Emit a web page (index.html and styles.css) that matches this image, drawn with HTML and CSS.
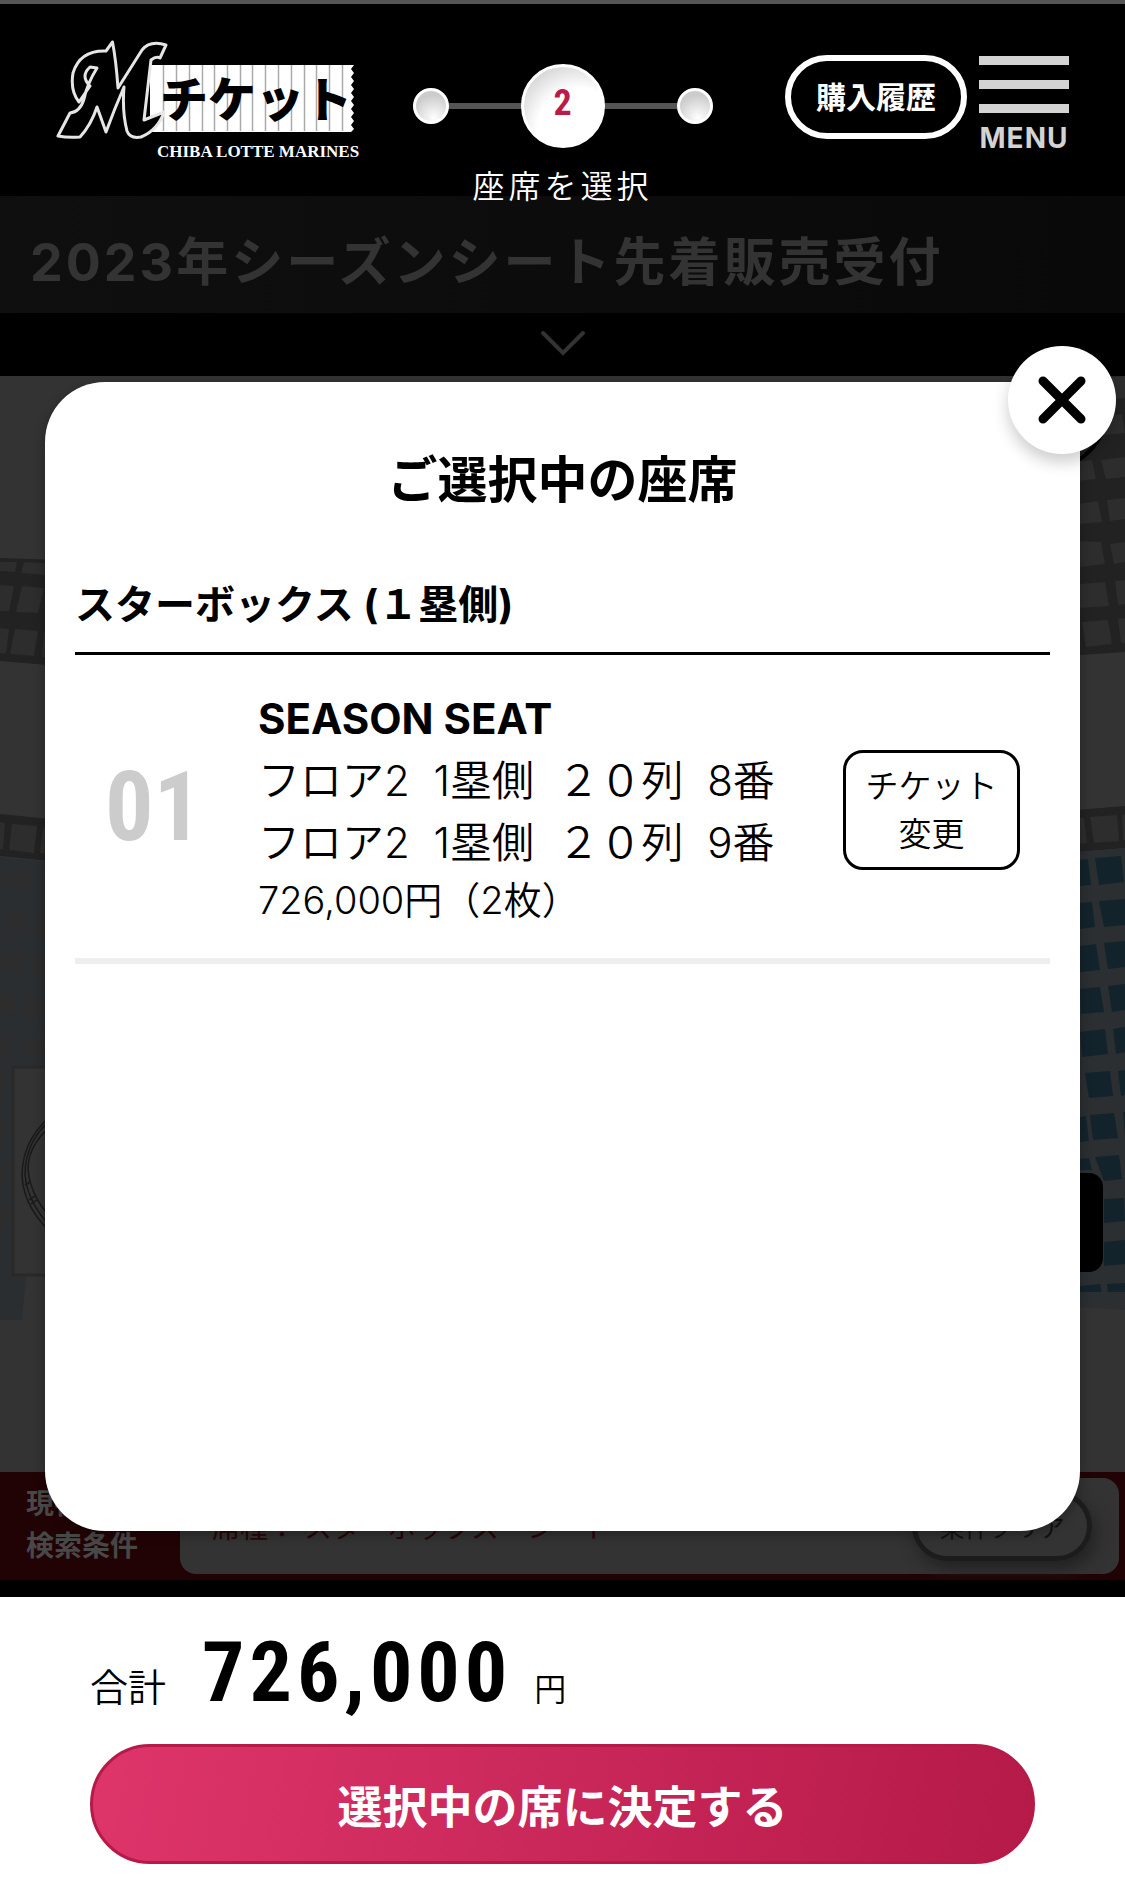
FILE: index.html
```html
<!DOCTYPE html>
<html lang="ja">
<head>
<meta charset="utf-8">
<meta name="viewport" content="width=device-width, initial-scale=1">
<title>ご選択中の座席 | Mチケット</title>
<link rel="stylesheet" href="styles.css">
</head>
<body>
<div class="page">
  <header class="header">
    <a class="logo" href="#" aria-label="Mチケット CHIBA LOTTE MARINES">
      <svg width="312" height="124" viewBox="56 38 312 124">
        <path fill="#fff" d="M150 65H354l-3 4 3 4-3 4 3 4-3 4 3 4-3 4 3 4-3 4 3 4-3 4 3 4-3 4 3 4-3 4 3 4-3 3H150z"/>
        <path stroke="#aaa" stroke-width="1.5" d="M163.500 65v66M176.500 65v66M189.500 65v66M202.500 65v66M214.500 65v66M227.500 65v66M240.500 65v66M252.500 65v66M265.500 65v66M278.500 65v66M291.500 65v66M304.500 65v66M316.500 65v66M329.500 65v66M342.500 65v66"/>
        <path fill="#000" stroke="#e6e6e6" stroke-width="3" stroke-linejoin="round" d="M112.500 42L106 51Q80 50 73 73Q70 91 79 102L90 86Q80 76 90 67L97 68Q87 84 84 99Q80 112 70 113L58 136Q68 138 80 137Q91 125 97 107L106 132Q114 110 124 87Q122 112 127 131Q130 139 141 137Q158 130 164 112L144 120L151 60Q156 56 160 58L166 45Q150 40 142 50L118 88Q116 60 112.500 42Z"/>
        <text class="logo-kana" x="160" y="117">チケット</text>
        <text class="logo-latin" x="157" y="157">CHIBA LOTTE MARINES</text>
      </svg>
    </a>
    <div class="steps">
      <ol class="step-track">
        <li class="step"></li>
        <li class="step current">2</li>
        <li class="step"></li>
      </ol>
      <p class="step-label">座席を選択</p>
    </div>
    <nav class="tools">
      <a class="history" href="#">購入履歴</a>
      <button class="menu" type="button"><i></i><i></i><i></i><span>MENU</span></button>
    </nav>
  </header>

  <h1 class="event">2023年シーズンシート先着販売受付</h1>
  <button class="expand" type="button" aria-label="詳細を開く">
    <svg width="48" height="28" viewBox="0 0 48 28"><path d="M4 4L24 24L44 4" fill="none" stroke="#333" stroke-width="4" stroke-linecap="round"/></svg>
  </button>

  <main class="map">
    <svg width="60" height="1096" viewBox="0 376 60 1096">
      <path fill="#222" d="M0 558L60 560V666L0 661z"/>
      <g fill="#2d2d2d">
        <path d="M0 562L17 562 15 572 0 571zM24 562L60 564V576L21 573zM0 585L14 586 9 611 0 611zM22 586L44 588 38 613 16 612zM50 589H60V614L45 613zM0 628L9 629 6 654 0 653zM15 629L38 631 34 656 10 654zM44 632L60 633V660L42 657z"/>
      </g>
      <path fill="#222" d="M0 814L60 820V862L0 856z"/>
      <path fill="#2d2d2d" d="M0 822L5 823 3 850 0 849zM12 824L37 826 34 853 9 850zM43 827L60 829V855L40 853z"/>
      <path fill="#2a2e31" d="M0 857L60 863V1066H12V1276H26L22 1320H0z"/>
      <g fill="#2d2d2d">
        <path d="M0 870L5 871 2 888 0 888zM14 871L33 873 30 890 10 888zM43 874H60V892L40 891zM0 910H1V928H0zM8 911L28 912 25 932 4 930zM37 912L60 914V936L34 934zM4 952L23 953 20 973 0 972zM32 954L54 956 50 976 29 975zM0 993L18 994 15 1014 0 1013zM27 995L49 997 46 1017 23 1016zM0 1036L12 1037 9 1056 0 1055zM22 1038L44 1040 40 1056 18 1056zM0 1078H8L5 1098H0zM0 1120H7L4 1140H0zM0 1164H9L6 1184H0zM0 1207H9L6 1226H0z"/>
      </g>
      <path fill="#333" stroke="#292929" stroke-width="3" d="M13 1067H70V1275H13z"/>
      <g fill="none" stroke="#191919" stroke-width="1.500">
        <path d="M60 1109Q22 1135 22 1176Q24 1212 60 1240"/>
        <path d="M60 1112Q25 1137 25 1174Q27 1206 60 1236"/>
        <path d="M60 1119Q28 1141 28 1169Q30 1199 60 1228"/>
        <path d="M25 1185l5-3M29 1200l6-4M31 1204l6-4"/>
      </g>
    </svg>
    <svg width="60" height="1096" viewBox="1065 376 60 1096">
      <path fill="#222" d="M1065 376H1125V652L1065 656z"/>
      <g fill="#2d2d2d">
        <path d="M1100 378L1125 376V398L1104 400zM1070 420L1090 417 1094 436 1072 438zM1100 416L1122 414 1125 433 1104 435zM1075 462L1092 460 1096 479 1078 481zM1101 460L1125 457V477L1106 479zM1078 504L1098 501 1102 522 1080 524zM1107 500L1125 498V519L1110 521zM1080 541L1101 542 1105 564 1080 567zM1110 544L1125 542V562L1114 564zM1080 584L1105 582 1109 606 1080 608zM1115 581L1125 580V604L1118 605zM1082 622L1108 620 1112 644 1086 647zM1118 619L1125 618V643L1121 643z"/>
      </g>
      <path fill="#222" d="M1065 811L1125 806V848L1065 853z"/>
      <path fill="#2d2d2d" d="M1080 818L1084 818 1087 843 1080 844zM1090 817L1117 815 1119 841 1094 843zM1122 815H1125V840H1123z"/>
      <path fill="#2b2f32" d="M1065 853L1125 848V1310L1065 1306z"/>
      <g fill="#13232c">
        <path d="M1080 860L1088 859 1091 885 1080 886zM1095 858L1121 856 1124 882 1099 885zM1080 903L1092 902 1095 927 1080 929zM1099 901L1125 899V925L1104 927zM1080 946L1096 944 1100 970 1080 972zM1104 943L1125 941V967L1108 969zM1080 989L1100 987 1104 1012 1081 1014zM1108 986L1125 984V1010L1112 1012zM1080 1032L1105 1029 1108 1054 1082 1057zM1113 1029L1125 1027V1052L1116 1054zM1085 1073L1110 1071 1113 1096 1089 1098zM1118 1071L1125 1070V1095L1121 1096zM1080 1117L1086 1116 1089 1141 1080 1142zM1090 1115L1114 1113 1118 1138 1093 1140zM1123 1112H1125V1136zM1080 1159L1089 1158 1092 1170H1080zM1095 1157L1119 1155 1122 1179 1104 1181zM1104 1199L1124 1198 1125 1221 1104 1223zM1104 1242L1125 1240V1264L1104 1266zM1080 1286L1100 1284 1102 1292H1080zM1107 1284L1125 1283V1292H1108z"/>
      </g>
      <circle cx="1049" cy="411" r="57" fill="none" stroke="#000" stroke-width="4"/>
      <rect x="1040" y="1173" width="63" height="99" rx="14" fill="#000"/>
    </svg>
  </main>

  <section class="filter">
    <p class="filter-name">現在の<br>検索条件</p>
    <div class="filter-box">
      <p class="filter-value">席種： スターボックス・シート</p>
      <button class="clear" type="button">条件クリア</button>
    </div>
  </section>

  <footer class="total">
    <p class="sum"><span class="sum-label">合計</span><strong class="sum-value">726,000</strong><span class="sum-unit">円</span></p>
    <button class="decide" type="button">選択中の席に決定する</button>
  </footer>

  <section class="modal" role="dialog" aria-labelledby="modal-title">
    <button class="close" type="button" aria-label="閉じる">
      <svg width="48" height="48" viewBox="0 0 48 48"><path d="M5 5L43 43M43 5L5 43" stroke="#000" stroke-width="9" stroke-linecap="round"/></svg>
    </button>
    <h2 class="modal-title" id="modal-title">ご選択中の座席</h2>
    <h3 class="area">スターボックス (１塁側)</h3>
    <article class="seat">
      <div class="seat-no">01</div>
      <div class="seat-info">
        <h4 class="seat-kind">SEASON SEAT</h4>
        <p class="seat-line">フロア2&nbsp; 1塁側&nbsp; ２０列&nbsp; 8番</p>
        <p class="seat-line">フロア2&nbsp; 1塁側&nbsp; ２０列&nbsp; 9番</p>
        <p class="seat-price">726,000円（2枚）</p>
      </div>
      <button class="change" type="button">チケット<br>変更</button>
    </article>
  </section>
</div>
</body>
</html>
```
FILE: styles.css
```css
* { box-sizing: border-box; margin: 0; padding: 0; }

body {
  font-family: Inter, "Noto Sans CJK JP", sans-serif;
  color: #000;
  background: #000;
}

button {
  font: inherit;
  color: inherit;
  background: none;
  border: 0;
}

a { color: inherit; text-decoration: none; }
svg { display: block; }

.page {
  position: relative;
  display: flex;
  flex-direction: column;
  min-height: 100vh;
  border-top: 4px solid #555;
}

/* header */
.header {
  position: relative;
  z-index: 1;
  display: grid;
  grid-template-columns: 1fr 300px 1fr;
  align-items: start;
  height: 192px;
  padding: 0 56px;
  color: #fff;
}

.logo { width: 312px; padding-top: 34px; }
.logo-kana { font: 900 48px "Noto Sans CJK JP", sans-serif; fill: #000; }
.logo-latin { font: bold 17px "Liberation Serif", serif; fill: #fff; }

.steps { padding-top: 60px; }

.step-track {
  display: flex;
  align-items: center;
  justify-content: space-between;
  list-style: none;
  background: linear-gradient(#555, #555) center / 100% 6px no-repeat;
}

.step {
  width: 36px;
  height: 36px;
  border: 3px solid #fff;
  border-radius: 50%;
  background: radial-gradient(circle at 60% 90%, #fff, #ccc 70%);
}

.step.current {
  width: 84px;
  height: 84px;
  background: radial-gradient(circle at 70% 80%, #fff 50%, #ccc 90%);
  color: #b91c49;
  font: bold 36px/72px "Roboto Condensed", "Liberation Sans", sans-serif;
  text-align: center;
}

.step-label {
  margin-top: 17px;
  font-size: 32px;
  font-weight: 350;
  line-height: 44px;
  letter-spacing: 4px;
  text-align: center;
}

.tools {
  display: flex;
  justify-content: flex-end;
  gap: 12px;
  padding-top: 51px;
}

.history {
  width: 182px;
  height: 84px;
  border: 6px solid #fff;
  border-radius: 42px;
  font-size: 30px;
  font-weight: 700;
  line-height: 72px;
  text-align: center;
}

.menu {
  display: flex;
  flex-direction: column;
  gap: 15px;
  width: 90px;
  padding-top: 1px;
  color: #d3d3d3;
}

.menu i { width: 90px; height: 9px; background: #d3d3d3; }
.menu span { font-size: 28px; font-weight: 700; line-height: 20px; letter-spacing: 1px; }

/* event title */
.event {
  height: 117px;
  padding: 0 30px;
  background: linear-gradient(90deg, #0f0f0f, #090909);
  color: #333;
  font-size: 52px;
  font-weight: 700;
  line-height: 134px;
  letter-spacing: 3px;
  white-space: nowrap;
}

.expand {
  display: flex;
  justify-content: center;
  height: 63px;
  padding-top: 16px;
}

/* seat map */
.map {
  flex: 1;
  display: flex;
  justify-content: space-between;
  background: #333;
}

/* search condition */
.filter {
  display: flex;
  height: 125px;
  padding: 6px 6px 6px 26px;
  border-bottom: 17px solid #000;
  background: #220305;
  color: #484848;
}

.filter-name {
  width: 154px;
  padding-top: 5px;
  font-size: 28px;
  font-weight: 700;
  line-height: 42px;
}

.filter-box {
  flex: 1;
  display: flex;
  justify-content: space-between;
  align-items: center;
  padding: 0 27px 0 32px;
  border-radius: 16px;
  background: #333;
}

.filter-value { color: #280608; font-size: 28px; }

.clear {
  width: 180px;
  height: 70px;
  border: 5px solid #1c1c1c;
  border-radius: 35px;
  box-shadow: 4px 8px 16px #222;
  color: #111;
  font-size: 25px;
}

/* total */
.total { height: 304px; padding: 32px 90px; background: #fff; }

.sum { display: flex; align-items: baseline; height: 88px; line-height: 44px; }
.sum-label { font-size: 38px; font-weight: 350; }
.sum-value {
  margin: 0 22px 0 36px;
  font: bold 84px/88px "Roboto Condensed", "Liberation Sans", sans-serif;
  letter-spacing: 5px;
}
.sum-unit { font-size: 32px; font-weight: 350; }

.decide {
  display: block;
  width: 100%;
  height: 120px;
  margin-top: 27px;
  border: 3px solid #b51a48;
  border-radius: 60px;
  background: linear-gradient(100deg, #de356b, #b51a48);
  color: #fff;
  font-size: 45px;
  font-weight: 700;
}

/* dialog over the map */
.modal {
  position: absolute;
  z-index: 2;
  top: 378px;
  right: 45px;
  bottom: 370px;
  left: 45px;
  padding: 62px 30px;
  border-radius: 60px;
  background: #fff;
  box-shadow: 0 4px 12px rgba(0, 0, 0, .3);
}

.close {
  position: absolute;
  top: -36px;
  right: -36px;
  display: grid;
  place-items: center;
  width: 108px;
  height: 108px;
  border-radius: 50%;
  background: #fff;
  box-shadow: 0 8px 16px rgba(0, 0, 0, .2);
}

.modal-title {
  font-size: 50px;
  font-weight: 700;
  line-height: 72px;
  text-align: center;
}

.area {
  margin-top: 60px;
  padding-bottom: 18px;
  border-bottom: 3px solid #000;
  font-size: 40px;
  font-weight: 700;
  line-height: 58px;
}

.seat {
  display: flex;
  align-items: center;
  padding: 32px 30px;
  border-bottom: 6px solid #eee;
}

.seat-no {
  width: 153px;
  color: #ccc;
  font: bold 96px/96px "Roboto Condensed", "Liberation Sans", sans-serif;
}

.seat-info { flex: 1; white-space: nowrap; font-weight: 350; }
.seat-kind { font-size: 42px; font-weight: 700; line-height: 63px; }
.seat-line { font-size: 42px; line-height: 62px; }
.seat-price { font-size: 38px; line-height: 52px; }

.change {
  width: 177px;
  height: 120px;
  margin-top: 6px;
  border: 3px solid #000;
  border-radius: 20px;
  font-size: 33px;
  font-weight: 350;
  line-height: 48px;
}
```
